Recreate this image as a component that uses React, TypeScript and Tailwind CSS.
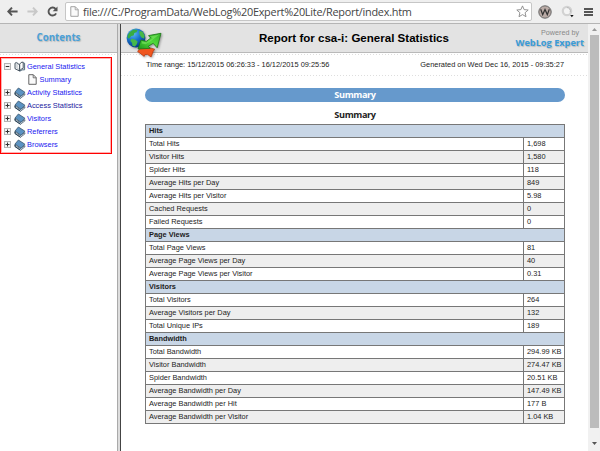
import React from "react";

const sans = "font-['Liberation_Sans',Arial,sans-serif]";
const human = "font-['Open_Sans','Noto_Sans',sans-serif]";

type Section = { title: string; rows: [string, string][] };

const sections: Section[] = [
  {
    title: "Hits",
    rows: [
      ["Total Hits", "1,698"],
      ["Visitor Hits", "1,580"],
      ["Spider Hits", "118"],
      ["Average Hits per Day", "849"],
      ["Average Hits per Visitor", "5.98"],
      ["Cached Requests", "0"],
      ["Failed Requests", "0"],
    ],
  },
  {
    title: "Page Views",
    rows: [
      ["Total Page Views", "81"],
      ["Average Page Views per Day", "40"],
      ["Average Page Views per Visitor", "0.31"],
    ],
  },
  {
    title: "Visitors",
    rows: [
      ["Total Visitors", "264"],
      ["Average Visitors per Day", "132"],
      ["Total Unique IPs", "189"],
    ],
  },
  {
    title: "Bandwidth",
    rows: [
      ["Total Bandwidth", "294.99 KB"],
      ["Visitor Bandwidth", "274.47 KB"],
      ["Spider Bandwidth", "20.51 KB"],
      ["Average Bandwidth per Day", "147.49 KB"],
      ["Average Bandwidth per Hit", "177 B"],
      ["Average Bandwidth per Visitor", "1.04 KB"],
    ],
  },
];

const books = ["Activity Statistics", "Access Statistics", "Visitors", "Referrers", "Browsers"];

function Arrow({ back }: { back?: boolean }) {
  return (
    <svg width="11" height="9" viewBox="0 0 11 9" className={back ? "" : "-scale-x-100"}>
      <path d="M5 .6 1.3 4.5 5 8.4M1.5 4.5H10.6" fill="none" stroke={back ? "#555" : "#c8c8c8"} strokeWidth="1.9" />
    </svg>
  );
}

function Toggle({ open }: { open?: boolean }) {
  return (
    <svg width="7" height="7" viewBox="0 0 7 7" className="shrink-0">
      <rect x=".5" y=".5" width="6" height="6" fill="#f3f3f3" stroke="#b4b4b4" strokeWidth="1" />
      <path d={open ? "M1.7 3.5h3.6" : "M1.5 3.5h4M3.5 1.5v4"} stroke="#333" strokeWidth="1" />
    </svg>
  );
}

function Book() {
  return (
    <svg width="12" height="12" viewBox="0 0 12 12" className="shrink-0">
      <path d="M1 6 6 9.6 10.9 6.6v1.3L6.5 11.2 1.2 7.8Z" fill="#e8eef3" stroke="#34495b" strokeWidth=".7" />
      <path d="M1 5 4.4 1 10.9 5.2 7 9.4Z" fill="#5c93c2" stroke="#37536a" strokeWidth=".8" />
      <path d="M1 5.2v2.3l5.4 3.7" fill="none" stroke="#2b4356" strokeWidth="1" />
    </svg>
  );
}

function OpenBook() {
  return (
    <svg width="12" height="11" viewBox="0 0 12 11" className="shrink-0">
      <path d="M1 2.2 2.3 1.5 5.6 3.8V10L1 7.7Z" fill="#f8f8f8" stroke="#34434f" strokeWidth=".9" />
      <path d="M5.7 10V3.1Q6.8.8 9.2 1.1V7.4Q7.1 7.4 5.7 10Z" fill="#fff" stroke="#34434f" strokeWidth=".9" />
      <path d="M9.4 2.2h1.2v6.6Q8 8.2 5.7 10.3" fill="none" stroke="#526b7e" strokeWidth="1" />
      <path d="M3 1V6.6L5.4 9" fill="none" stroke="#8a97a1" strokeWidth=".6" />
    </svg>
  );
}

function Page({ className = "", stroke = "#555" }: { className?: string; stroke?: string }) {
  return (
    <svg width="9" height="11" viewBox="0 0 9 11" className={"shrink-0 " + className}>
      <path d="M.8.7h4.5l2.9 2.9v6.7H.8Z" fill="#fafafa" stroke={stroke} strokeWidth=".9" />
      <path d="M5.2.8v3h3" fill="none" stroke={stroke} strokeWidth=".8" />
    </svg>
  );
}

function Logo() {
  return (
    <svg width="37" height="31" viewBox="0 0 37 31" className="drop-shadow-[1px_1px_1px_rgba(0,0,0,.35)]">
      <defs>
        <radialGradient id="sea" cx=".35" cy=".25" r=".8">
          <stop offset="0" stopColor="#62bdf4" />
          <stop offset=".5" stopColor="#1671cc" />
          <stop offset="1" stopColor="#063580" />
        </radialGradient>
        <linearGradient id="leaf" x1="1" y1="0" x2="0" y2="1">
          <stop offset="0" stopColor="#35b52a" />
          <stop offset=".5" stopColor="#52da3c" />
          <stop offset="1" stopColor="#1d9419" />
        </linearGradient>
      </defs>
      <circle cx="10" cy="10" r="9.4" fill="url(#sea)" />
      <path d="M3.8 4 7.6 1.5l4 .4-1 2.3-2.2.8-.8 2.4-2.4.7L3 10.7 1.4 9.6Q1.4 6.6 3.8 4Z" fill="#38ac42" />
      <path d="m13.2 2.8 3.5.9 1.9 3.8-.4 3.2-3-1.5-1.7-2.9Z" fill="#46b846" />
      <path d="m5.2 10.8 3.8.7 2.6 2-.7 2.6-1.9 2.4-2.5-.8-.5-3-1.6-1.8Z" fill="#46b84b" />
      <path d="m11.6 23.4 4.8-5.4.9 2.4 7.2-.4 4.2 1.2-1.6 2.2-2 5.6-3.5-2.6-2.8.2-.6 1.8Z" fill="#f0561f" stroke="#b8370f" strokeWidth=".7" />
      <path d="M35 5.3 22.5 7.6l2.2 2.4-4.4 3.4L15 12l-3 9 12.2-.7-2-2 5-3 4 4.5Z" fill="url(#leaf)" stroke="#1b7517" strokeWidth=".8" />
      <path d="m25 8.4 8.4-1.8-8.2 6.2-5.6 3.4-4-.6.6-2 4.6 1 5.8-4.2Z" fill="#8bea70" opacity=".5" />
    </svg>
  );
}

function Perforation() {
  return <div className="h-px bg-[repeating-linear-gradient(90deg,#dedede_0_1px,transparent_1px_3px)]" />;
}

function Toolbar() {
  return (
    <div className="flex h-[24px] shrink-0 items-center border-b border-[#b5b5b5] bg-[#efefef] pl-[7px]">
      <div className="flex w-[58px] items-center gap-[9px]">
        <Arrow back />
        <Arrow />
        <svg width="11" height="11" viewBox="0 0 11 11">
          <path d="M8.7 3.1A4 4 0 1 0 9.1 7.4" fill="none" stroke="#555" strokeWidth="1.9" />
          <path d="M10.5.5v4.8H5.7Z" fill="#555" />
        </svg>
      </div>
      <div className="flex h-[19px] w-[467px] items-center rounded-[2px] border border-[#c6c6c6] bg-white pl-1 pr-[2px]">
        <Page stroke="#999" />
        <span className={human + " ml-[4px] whitespace-nowrap text-[10.9px] leading-[16px] tracking-[-0.26px] text-[#444]"}>
          file:///C:/ProgramData/WebLog%20Expert%20Lite/Report/index.htm
        </span>
        <svg width="13" height="13" viewBox="0 0 13 13" className="ml-auto shrink-0">
          <path d="m6.5.9 1.6 3.7 4.1.4-3.1 2.7.9 4L6.5 9.6 3 11.7l.9-4L.8 5l4.1-.4Z" fill="#fff" stroke="#888" strokeWidth=".9" />
        </svg>
      </div>
      <svg width="14" height="14" viewBox="0 0 14 14" className="ml-[6px]">
        <circle cx="7" cy="7" r="6.2" fill="#b9aaa5" stroke="#666" strokeWidth="1" />
        <path d="m2.7 4.3 2 5.3L7 4.5l2.3 5.1 2-5.3" fill="none" stroke="#333" strokeWidth="1.2" />
      </svg>
      <svg width="14" height="14" viewBox="0 0 14 14" className="ml-[9px]">
        <circle cx="6" cy="6" r="4.2" fill="#f4f4f4" stroke="#d2d2d2" strokeWidth="2.2" />
        <path d="M6 2.5a3.5 3.5 0 0 1 3.2 4.6" fill="none" stroke="#b8b8b8" strokeWidth="1" />
        <path d="M9.2 10h3.4L10.9 12.2Z" fill="#111" />
      </svg>
      <div className="ml-[9px] flex flex-col gap-[1px]">
        <i className="h-[2px] w-[9px] bg-[#555]" />
        <i className="h-[2px] w-[9px] bg-[#555]" />
        <i className="h-[2px] w-[9px] bg-[#555]" />
      </div>
    </div>
  );
}

function Sidebar() {
  return (
    <aside className="w-[117px] shrink-0">
      <div className={human + " flex h-[29px] items-center justify-center border-b border-[#b9b9b9] bg-[#e3e3e3] pt-px text-[9.7px] font-bold text-[#4aa0d8] [text-shadow:1px_1px_1px_#bbb]"}>
        Contents
      </div>
      <div className="pt-px"><Perforation /></div>
      <nav className="mt-[2px] h-[97px] w-[112px] border border-[#ff0000] pl-[3px] pt-[2px] text-[7.4px] text-[#2020f0] shadow-[inset_0_0_0_1px_rgba(255,0,0,0.3)]">
        <div className="flex h-[13px] items-center"><Toggle open /><span className="ml-[3px] flex"><OpenBook /></span><span className="ml-[1px]">General Statistics</span></div>
        <div className="flex h-[13px] items-center pl-[24px]"><Page /><span className="ml-[2.5px]">Summary</span></div>
        {books.map((b) => (
          <div key={b} className="flex h-[13px] items-center">
            <Toggle /><span className="ml-[3px] flex"><Book /></span><span className={"ml-[1px] " + (b === "Access Statistics" ? "text-[#2020a0]" : "")}>{b}</span>
          </div>
        ))}
      </nav>
    </aside>
  );
}

function StatsTable() {
  return (
    <table className="w-[420px] table-fixed border-collapse text-[7.4px] leading-[12px] text-[#1c1c1c]">
      <colgroup><col className="w-[378px]" /><col /></colgroup>
      <tbody>
        {sections.map((s) => (
          <React.Fragment key={s.title}>
            <tr className="h-[13px] bg-[#c8d6e6]">
              <th colSpan={2} className="border border-[#777] p-0 pl-[3px] text-left font-bold">{s.title}</th>
            </tr>
            {s.rows.map(([k, v], i) => (
              <tr key={k} className={i % 2 ? "h-[13px] bg-[#eeeeee]" : "h-[13px] bg-white"}>
                <td className="border border-[#777] p-0 pl-[3px]">{k}</td>
                <td className="whitespace-nowrap border border-[#777] p-0 pl-[3px]">{v}</td>
              </tr>
            ))}
          </React.Fragment>
        ))}
      </tbody>
    </table>
  );
}

function Report() {
  return (
    <main className="w-[467px] shrink-0">
      <header className="relative flex h-[29px] items-center border-b border-[#b9b9b9] bg-[#e3e3e3]">
        <div className="absolute left-[5px] top-[4px]"><Logo /></div>
        <h1 className="ml-[138px] w-[200px] whitespace-nowrap pt-[2px] text-[11.55px] font-bold text-black">Report for csa-i: General Statistics</h1>
        <div className="ml-auto flex flex-col items-end pr-[4px]">
          <span className="pr-[5px] text-[7.2px] leading-[8px] text-[#888]">Powered by</span>
          <span className={human + " whitespace-nowrap text-[9.2px] font-bold leading-[11px] text-[#399bd8] [text-shadow:1px_1px_1px_#bbb]"}>WebLog Expert</span>
        </div>
      </header>
      <div className="pt-px"><Perforation /></div>
      <div className="flex h-[20px] items-center justify-between pl-[25px] pr-[24px] text-[7.4px] text-[#222]">
        <span>Time range: 15/12/2015 06:26:33 - 16/12/2015 09:25:56</span>
        <span>Generated on Wed Dec 16, 2015 - 09:35:27</span>
      </div>
      <Perforation />
      <div className={human + " ml-[24px] mt-[12px] flex h-[14px] w-[420px] items-center justify-center rounded-full bg-[#6699cc] text-[9.2px] font-bold tracking-[-0.4px] text-white"}>Summary</div>
      <h2 className={human + " ml-[24px] mt-[6px] flex h-[13px] w-[420px] items-center justify-center text-[9.2px] font-bold tracking-[-0.4px] text-[#222]"}>Summary</h2>
      <div className="ml-[24px] mt-[3px]"><StatsTable /></div>
    </main>
  );
}

export default function App() {
  return (
    <div className={sans + " flex h-[451px] w-[600px] flex-col overflow-hidden bg-white"}>
      <Toolbar />
      <div className="flex min-h-0 flex-1">
        <Sidebar />
        <div className="w-[4px] shrink-0 border-l border-r border-l-[#aaa] border-r-[#444] bg-[#ddd]" />
        <Report />
        <div className="flex flex-1 flex-col items-center bg-[#f1f1f1]">
          <div className="flex h-[11px] items-center"><svg width="5" height="3" viewBox="0 0 5 3"><path d="M0 3 2.5 0 5 3Z" fill="#999" /></svg></div>
          <div className="h-[393px] w-[9px] bg-[#bcbcbc]" />
          <div className="mt-[14px]"><svg width="5" height="3" viewBox="0 0 5 3" className="block"><path d="M0 0h5L2.5 3Z" fill="#555" /></svg></div>
        </div>
      </div>
    </div>
  );
}
